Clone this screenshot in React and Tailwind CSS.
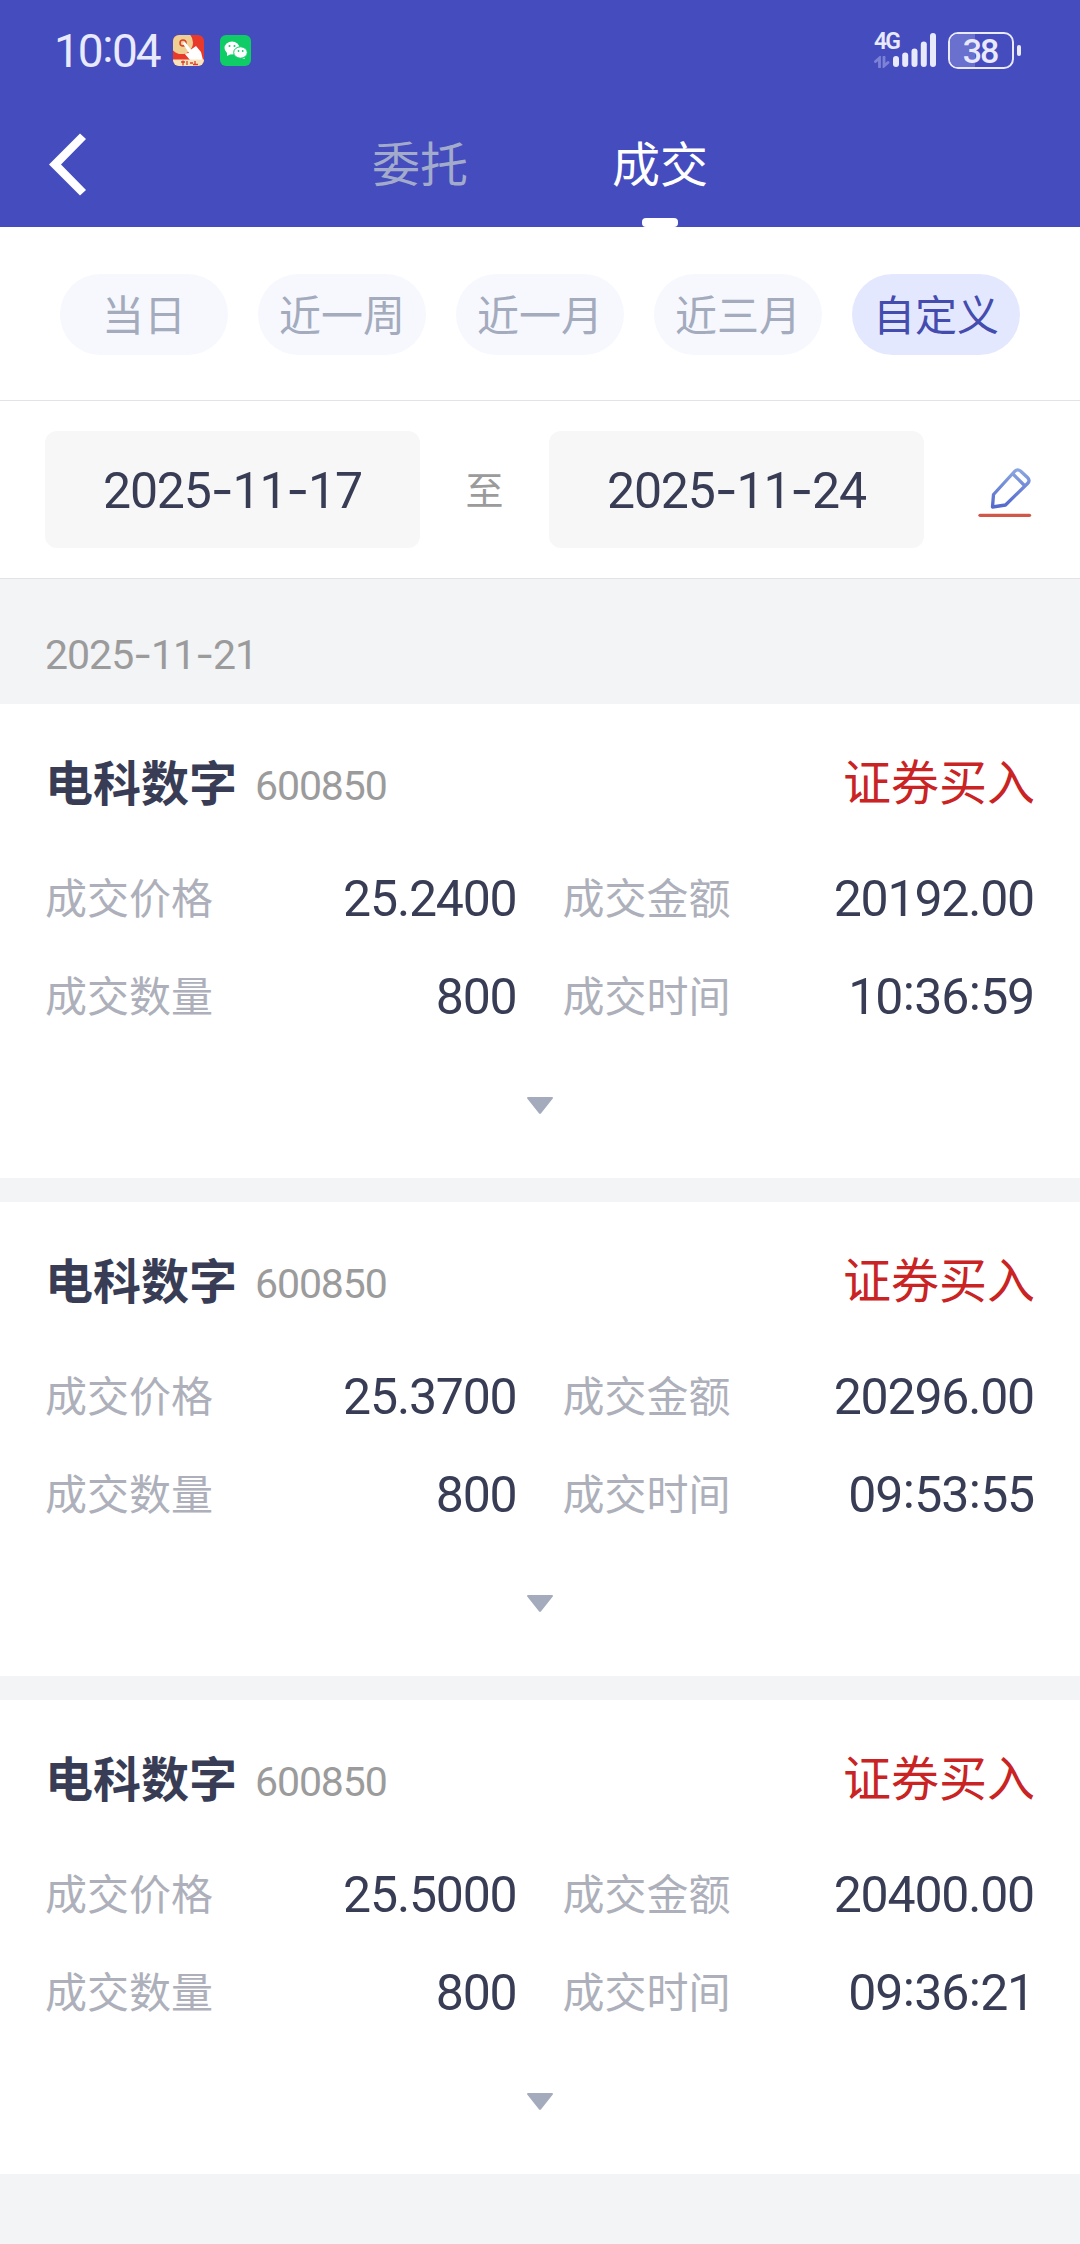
import { useState } from "react";

const RANGES = ["当日", "近一周", "近一月", "近三月", "自定义"];

const DEALS = [
  { name: "电科数字", code: "600850", side: "证券买入", price: "25.2400", amount: "20192.00", qty: "800", time: "10:36:59" },
  { name: "电科数字", code: "600850", side: "证券买入", price: "25.3700", amount: "20296.00", qty: "800", time: "09:53:55" },
  { name: "电科数字", code: "600850", side: "证券买入", price: "25.5000", amount: "20400.00", qty: "800", time: "09:36:21" },
];

// digits with wide hyphens and vertically centred colons
function Num({ children, className = "" }) {
  return (
    <span className={`whitespace-nowrap font-['Roboto','Noto_Sans_CJK_SC',sans-serif] ${className}`}>
      {children.split(/([-:])/).map((part, i) => {
        if (part === "-") return <span key={i} className="font-['Inter',sans-serif]">-</span>;
        if (part === ":") return <span key={i} className="relative -top-[0.09em] mx-[0.012em]">:</span>;
        return part;
      })}
    </span>
  );
}

function StatusBar() {
  return (
    <div className="flex h-[101px] items-center pl-[54px] pr-[59px] text-[#e9e9fc]">
      <Num className="w-[119px] text-[46px] leading-none tracking-[-2px]">10:04</Num>
      <svg width="31" height="31" viewBox="0 0 31 31" className="shrink-0">
        <clipPath id="appClip"><rect width="31" height="31" rx="6" /></clipPath>
        <g clipPath="url(#appClip)">
          <rect width="31" height="31" fill="#e8392b" />
          <circle cx="8.500" cy="7.500" r="11.500" fill="#f0cf93" />
          <circle cx="10" cy="8" r="3" fill="none" stroke="#d8412c" strokeWidth="1.500" />
          <path d="M9.500 8 L12 7 L18 14.500 L23 11 L28 17 L30 25 H17 L11.500 18.500 L16 18 Z" fill="#fff" />
          <rect y="24.500" width="31" height="7" fill="#f8e3bd" />
          <path d="M8 27h4M10 25.500v5M14 26v4M17 28h3M22 26v4M20 29.500h5" stroke="#d8412c" strokeWidth="1.300" />
        </g>
      </svg>
      <svg width="31" height="31" viewBox="0 0 31 31" className="ml-4 shrink-0">
        <rect width="31" height="31" rx="6" fill="#0fcc67" />
        <ellipse cx="12" cy="13" rx="7.500" ry="6.500" fill="#fff" />
        <path d="M7 17v4l4-2zM23 20l2 4-5-1.500z" fill="#fff" />
        <ellipse cx="20.500" cy="17.500" rx="6.800" ry="5.700" fill="#fff" stroke="#0fcc67" strokeWidth="1" />
        <g fill="#0fcc67">
          <circle cx="9.500" cy="11" r="1" />
          <circle cx="14.500" cy="11" r="1" />
          <circle cx="18.500" cy="16" r="0.900" />
          <circle cx="22.700" cy="16" r="0.900" />
        </g>
      </svg>
      <div className="ml-auto flex items-center">
        <div className="flex h-[37px] items-end">
          <div className="flex w-[19px] flex-col self-stretch">
            <span className="font-['Roboto',sans-serif] text-[23px] font-semibold leading-[20px] tracking-[-2px]">4G</span>
            <svg width="16" height="12" viewBox="0 0 16 12" className="mt-[4px]">
              <path d="M5.500 11V2L1.500 5.500M10 1v9L14 6.500" fill="none" stroke="#7d82d6" strokeWidth="2.800" strokeLinecap="round" />
            </svg>
          </div>
          <svg width="44" height="35" viewBox="0 0 44 35" fill="currentColor" className="mb-[2px]">
            <rect x="0" y="24" width="6" height="11" rx="3" />
            <rect x="9.200" y="20.500" width="6" height="14.500" rx="3" />
            <rect x="18.500" y="16.500" width="6" height="18.500" rx="3" />
            <rect x="27.800" y="9.500" width="6" height="25.500" rx="3" />
            <rect x="37" y="1" width="6" height="34" rx="3" />
          </svg>
        </div>
        <div className="relative ml-[11px] flex h-[37px] w-[66px] items-center justify-center overflow-hidden rounded-[10px] border-[2.5px] border-[#e9e9fc]">
          <div className="absolute inset-y-0 left-0 w-[40%] bg-[#6a70cd]" />
          <Num className="relative pr-[2px] text-[34px] font-medium leading-none tracking-[-2px]">38</Num>
        </div>
        <div className="ml-[3px] h-[11px] w-1 rounded-full bg-[#e9e9fc]" />
      </div>
    </div>
  );
}

function PencilIcon() {
  return (
    <svg width="54" height="54" viewBox="0 0 54 54" fill="none">
      <defs>
        <linearGradient id="pen" x1="0" y1="0" x2="0" y2="1">
          <stop offset="0" stopColor="#8aa6e0" />
          <stop offset="1" stopColor="#5568cc" />
        </linearGradient>
      </defs>
      <path d="M15.500 29.500 L36.500 6.500 Q39.500 3.500 42.500 6 L49.500 12.500 Q52.500 15.500 49.500 18.500 L27.500 40 L14.500 42 Z M35.500 9.500 L46 20" stroke="url(#pen)" strokeWidth="3.300" strokeLinejoin="round" />
      <path d="M2 50.300H51.500" stroke="#d0584a" strokeWidth="3.300" strokeLinecap="round" />
    </svg>
  );
}

function Field({ label, value }) {
  return (
    <div className="flex h-[98px] items-center justify-between">
      <span className="pb-[5px] text-[42px] leading-none text-[#adb0ba]">{label}</span>
      <Num className="pr-[1px] pt-[2px] text-[50px] leading-none tracking-[-1.2px] text-[#383d55]">{value}</Num>
    </div>
  );
}

function DealCard({ deal }) {
  return (
    <div className="h-[474px] bg-white px-[45px] pt-[42px]">
      <div className="flex h-[72px] items-center justify-between">
        <div className="flex items-center">
          <span className="pb-[5px] text-[48px] font-bold leading-none text-[#383d55]">{deal.name}</span>
          <Num className="ml-[18px] mt-[8px] text-[41px] leading-none tracking-[-1.1px] text-[#9b9b9b]">{deal.code}</Num>
        </div>
        <span className="pb-[7px] text-[48px] leading-none text-[#c92323]">{deal.side}</span>
      </div>
      <div className="mt-[31px] grid grid-cols-2 gap-x-[45px]">
        <Field label="成交价格" value={deal.price} />
        <Field label="成交金额" value={deal.amount} />
        <Field label="成交数量" value={deal.qty} />
        <Field label="成交时间" value={deal.time} />
      </div>
      <div className="mt-[52px] flex justify-center">
        <svg width="28" height="18" viewBox="0 0 28 18">
          <path d="M2 1 H26 L14.500 15.500 Q14 16 13.500 15.500 Z" fill="#a3abbd" stroke="#a3abbd" strokeWidth="2" strokeLinejoin="round" />
        </svg>
      </div>
    </div>
  );
}

export default function App() {
  const [tab, setTab] = useState("成交");
  const [range, setRange] = useState("自定义");

  return (
    <div className="h-[2244px] w-[1080px] overflow-hidden bg-[#f3f4f6] font-['Noto_Sans_CJK_SC',sans-serif]">
      <header className="h-[227px] bg-[#444cbe]">
        <StatusBar />
        <div className="flex h-[126px] items-stretch pl-[49px]">
          <button className="flex items-center">
            <svg width="37" height="63" viewBox="0 0 37 63" fill="#fff">
              <path d="M0 31.500 L31 0.500 L37 6 L12 31.500 L37 57 L31 62.500 Z" />
            </svg>
          </button>
          <div className="ml-[286px] flex gap-[144px]">
            {["委托", "成交"].map((t) => (
              <button
                key={t}
                onClick={() => setTab(t)}
                className={`flex flex-col items-center text-[48px] leading-[48px] ${tab === t ? "text-white" : "text-[#a2abcb]"}`}
              >
                <span className="mt-[36px] h-[81px]">{t}</span>
                {tab === t && <span className="h-[9px] w-9 rounded-[4px] bg-white" />}
              </button>
            ))}
          </div>
        </div>
      </header>

      <div className="flex h-[174px] gap-[30px] border-b border-[#e2e3e6] bg-white pl-[60px] pt-[47px]">
        {RANGES.map((r) => (
          <button
            key={r}
            onClick={() => setRange(r)}
            className={`flex h-[81px] w-[168px] items-center justify-center rounded-full pb-[3px] text-[42px] leading-none ${
              range === r ? "bg-[#e4e8fe] text-[#444cae]" : "bg-[#f6f8fd] text-[#a3abbd]"
            }`}
          >
            {r}
          </button>
        ))}
      </div>

      <div className="flex h-[178px] items-center border-b border-[#e2e3e6] bg-white pl-[45px]">
        <div className="flex h-[117px] w-[375px] items-center justify-center rounded-xl bg-[#f7f7f7] pt-[2px] text-[50px] leading-none tracking-[-1.2px] text-[#383d55]">
          <Num>2025-11-17</Num>
        </div>
        <span className="w-[129px] pb-[3px] text-center text-[38px] leading-none text-[#9b9b9b]">至</span>
        <div className="flex h-[117px] w-[375px] items-center justify-center rounded-xl bg-[#f7f7f7] pt-[2px] text-[50px] leading-none tracking-[-1.2px] text-[#383d55]">
          <Num>2025-11-24</Num>
        </div>
        <button className="ml-[54px] pt-[5px]">
          <PencilIcon />
        </button>
      </div>

      <div className="flex h-[125px] items-center pl-[45px] pt-[27px]">
        <Num className="text-[41px] leading-none tracking-[-1px] text-[#9b9b9b]">2025-11-21</Num>
      </div>

      <div className="flex flex-col gap-6">
        {DEALS.map((d) => (
          <DealCard key={d.time} deal={d} />
        ))}
      </div>
    </div>
  );
}
